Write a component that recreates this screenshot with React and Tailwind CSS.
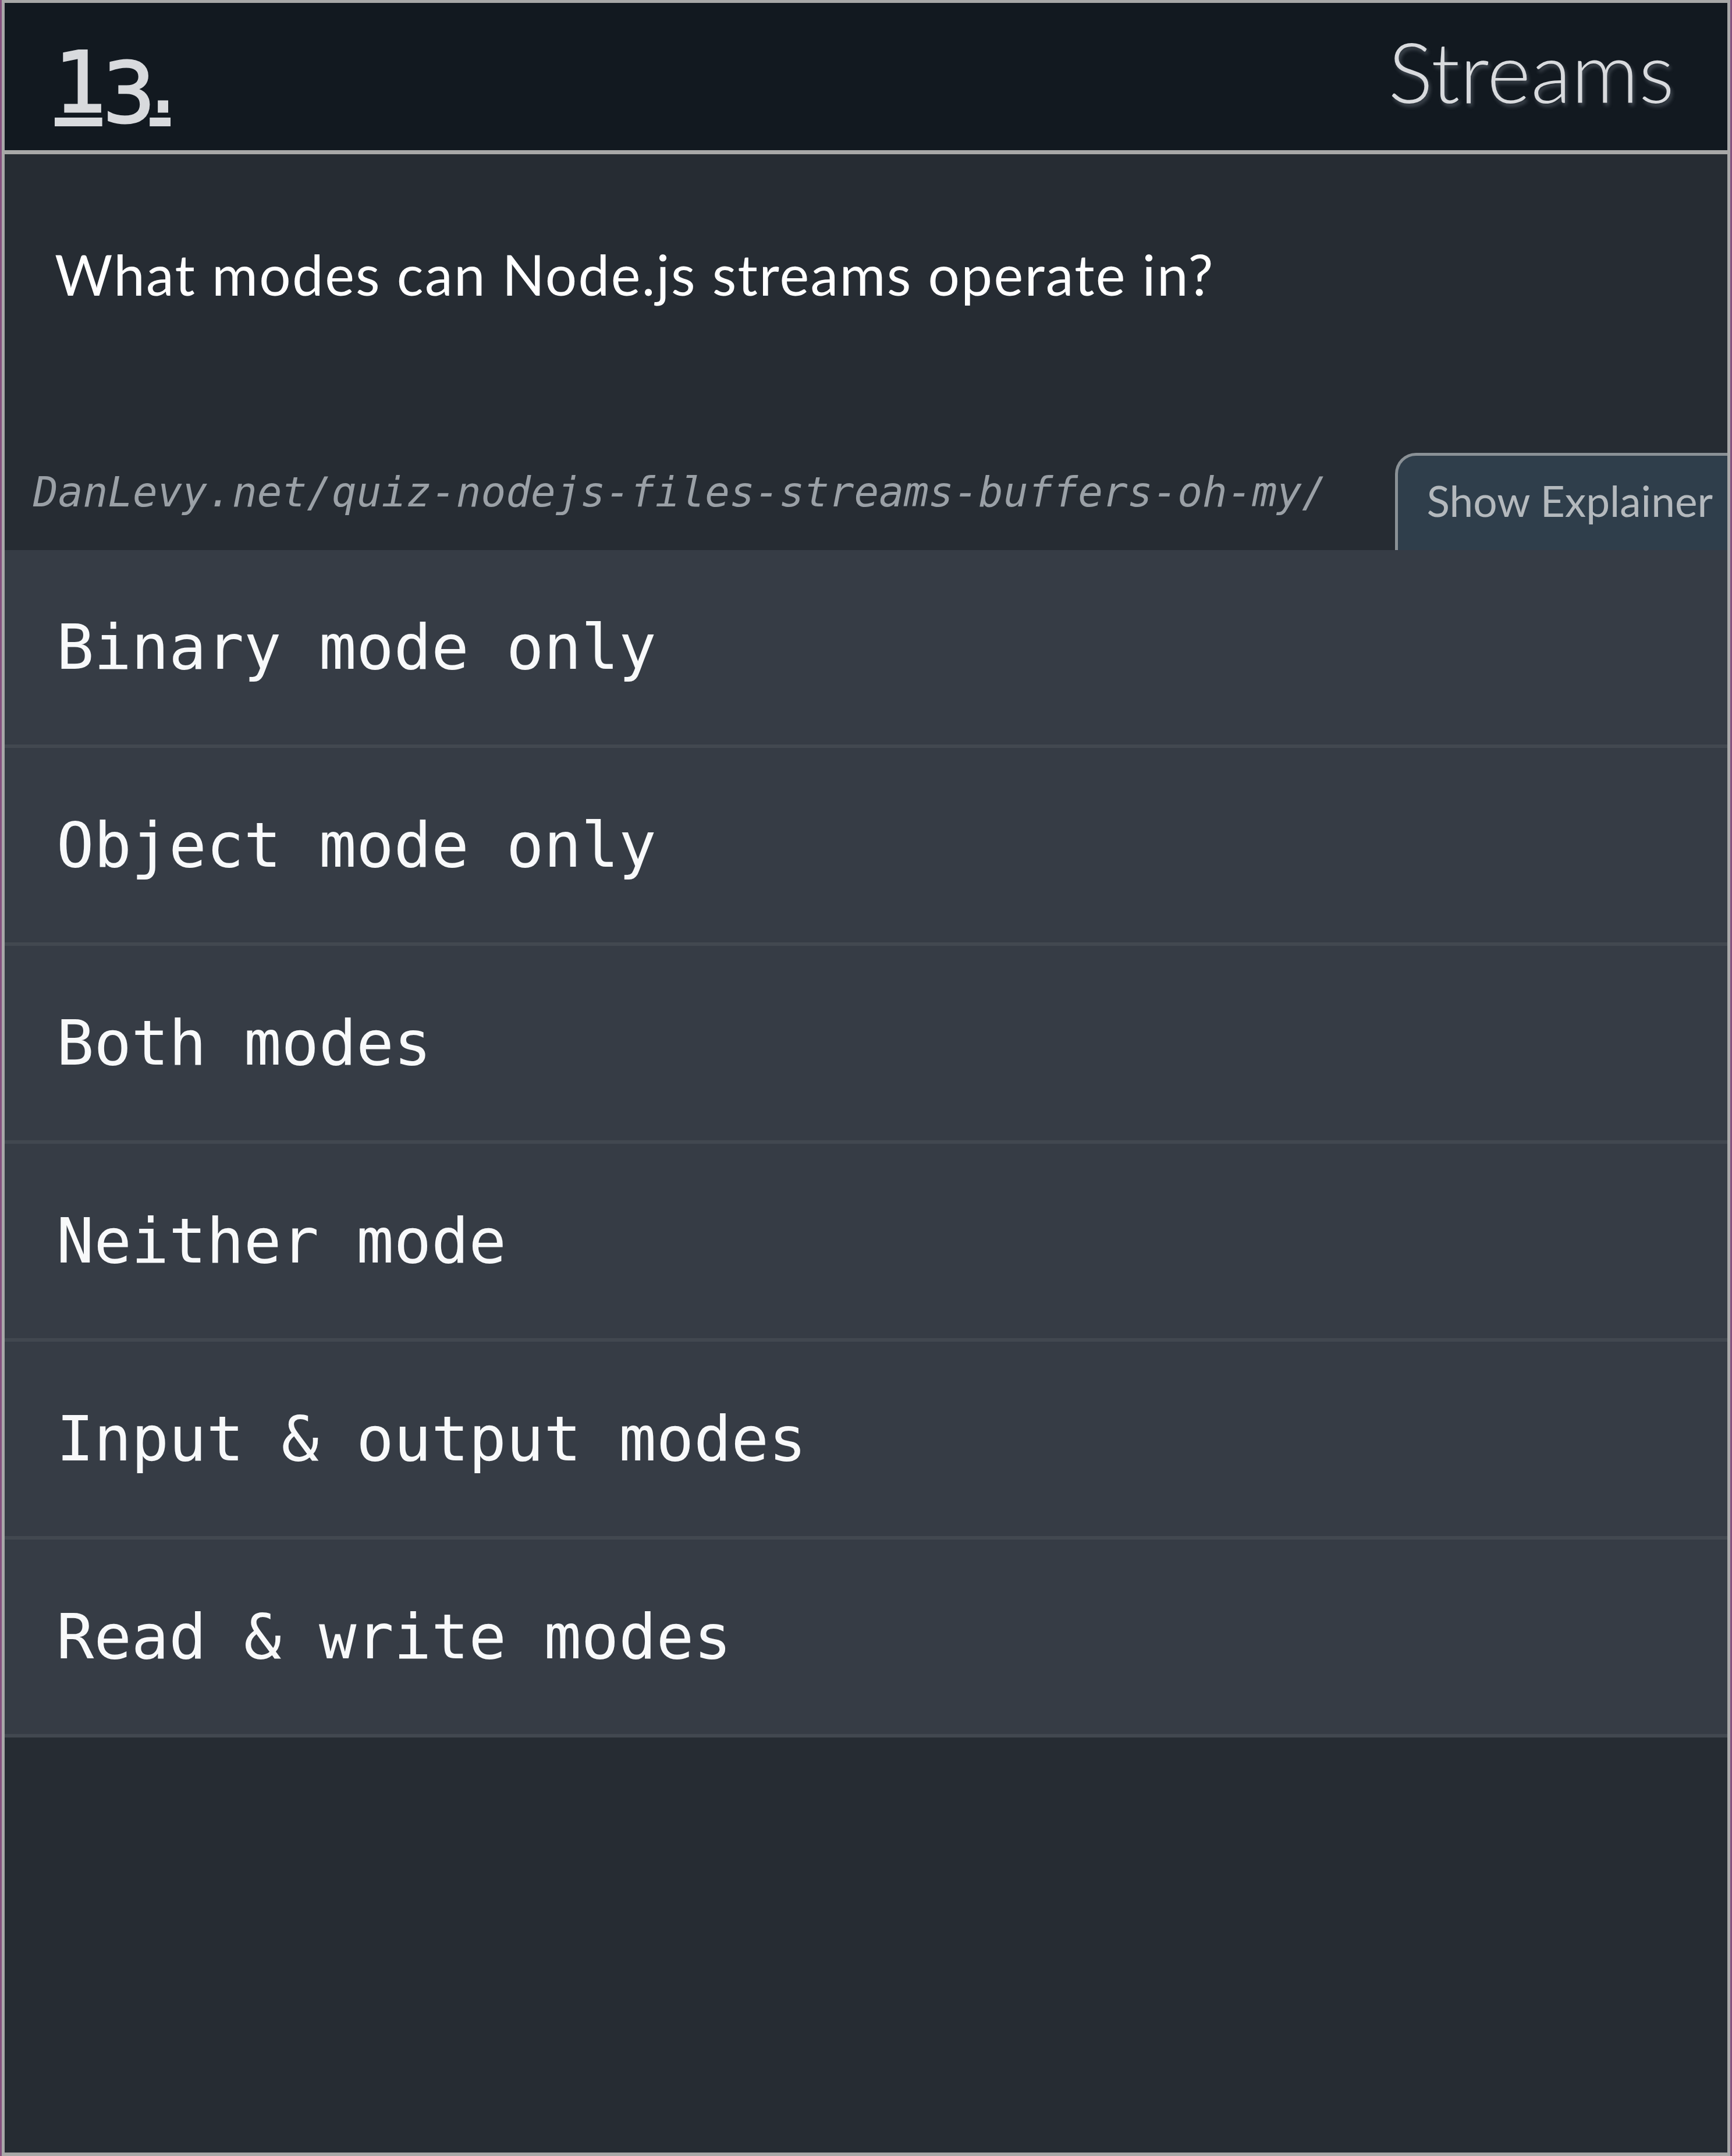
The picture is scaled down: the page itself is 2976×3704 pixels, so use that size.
import React from 'react';

const options = [
    'Binary mode only',
    'Object mode only',
    'Both modes',
    'Neither mode',
    'Input & output modes',
    'Read & write modes',
];

const sans = "font-['Lato','Open_Sans',sans-serif]";

export default function App() {
    return (
        <div className="w-[2976px] h-[3704px] bg-[#86507f] px-[3px]">
            <div className="h-full flex flex-col border-[5px] border-b-[6px] border-[#a8a8a8] bg-[#262c33] overflow-hidden">
                {/* Header */}
                <header className="h-[260px] shrink-0 flex items-center justify-between bg-[#121920] border-b-[7px] border-[#a8a8a8] pl-[86px] pr-[91px]">
                    <div className="font-['DejaVu_Sans',sans-serif] text-[144px] leading-none text-[#d8dadd] [-webkit-text-stroke:3px_#d8dadd] tracking-[-10px] flex items-start mt-[20px]">
                        <span className="underline decoration-[15px] underline-offset-[10px]">1</span>
                        <span className="inline-block translate-y-[18px]">3</span>
                        <span className="underline decoration-[15px] underline-offset-[10px]">.</span>
                    </div>
                    <h2 className={`${sans} font-light text-[144px] leading-none text-[#d8dadd] [text-shadow:3px_5px_6px_rgba(160,170,180,0.35)] -mt-[20px]`}>
                        Streams
                    </h2>
                </header>

                {/* Question */}
                <section className="h-[680px] shrink-0 flex flex-col">
                    <p className={`${sans} text-[96px] leading-none tracking-[2.3px] text-white pl-[86px] pt-[158px]`}>
                        What modes can Node.js streams operate in?
                    </p>
                    <div className="mt-auto flex items-end justify-between">
                        <span className="font-['DejaVu_Sans_Mono',monospace] italic text-[71px] leading-none text-[#9aa0a6] pl-[49px] pb-[64px]">
                            DanLevy.net/quiz-nodejs-files-streams-buffers-oh-my/
                        </span>
                        <button className={`${sans} shrink-0 h-[167px] -mr-[40px] pl-[50px] pr-[60px] pb-[8px] rounded-t-[36px] border-[5px] border-b-0 border-[#8a9196] bg-[#2f3e4b] text-[73px] text-[#b4b9bd] leading-none`}>
                            Show Explainer
                        </button>
                    </div>
                </section>

                {/* Options */}
                <ul className="shrink-0">
                    {options.map((opt) => (
                        <li
                            key={opt}
                            className="h-[340px] flex items-center bg-[#363c45] border-b-[6px] border-[#424850] pl-[89px] font-['DejaVu_Sans_Mono',monospace] text-[107px] leading-none text-[#f8f9fa] whitespace-pre"
                        >
                            {opt}
                        </li>
                    ))}
                </ul>

                <div className="flex-1 bg-[#262c33]" />
            </div>
        </div>
    );
}
